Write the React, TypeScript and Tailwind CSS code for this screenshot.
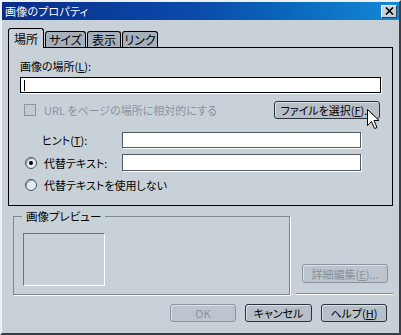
import React from "react";

const btn =
  "flex items-center justify-center rounded-[3px] border border-[#2a323c] bg-[#b7bfc9] shadow-[inset_1px_1px_0_#dde2e8] text-[11px] leading-[16px] text-black";
const btnDis =
  "flex items-center justify-center rounded-[3px] border border-[#8c949e] bg-[#bcc4cd] shadow-[inset_1px_1px_0_#dde2e8] text-[11px] leading-[16px] text-[#8b939d]";
const field =
  "h-[16px] bg-white border border-[#535b66] shadow-[1px_1px_0_#ffffff]";

function Radio({ checked }: { checked?: boolean }) {
  return (
    <span className="w-[12px] h-[12px] rounded-full border border-[#4a525c] bg-[#e4ecf0] flex items-center justify-center shadow-[inset_1px_1px_0_#9aa4ae]">
      {checked && <span className="w-[4px] h-[4px] rounded-full bg-black" />}
    </span>
  );
}

export default function App() {
  return (
    <div className="w-[401px] h-[335px] bg-[#c8d0d8] flex flex-col border-l-2 border-t-2 border-r-2 border-b-2 border-l-[#eef1f4] border-t-[#eef1f4] border-r-[#3a3f46] border-b-[#3a3f46] font-['Noto_Sans_CJK_JP',sans-serif] [font-feature-settings:'palt'] text-[11px] leading-[16px] text-black select-none relative">
      {/* title bar */}
      <div className="h-[18px] bg-linear-to-r from-[#0a2c88] via-[#0a4cac] to-[#1488d4] flex items-center justify-between pl-[3px] pr-[2px]">
        <span className="text-white text-[11px] leading-[16px] tracking-[0.2px]">画像のプロパティ</span>
        <span className="w-[16px] h-[13px] bg-[#c8d0d8] border border-t-white border-l-white border-r-[#3a3f46] border-b-[#3a3f46] flex items-center justify-center">
          <svg width="9" height="8" viewBox="0 0 9 8">
            <path d="M1 0.5 L8 7.5 M8 0.5 L1 7.5" stroke="black" strokeWidth="1.6" />
          </svg>
        </span>
      </div>

      <div className="flex flex-col px-[6px]">
        {/* tabs */}
        <div className="flex items-end h-[19px] mt-[8px] gap-[1px] text-[12px]">
          <div className="relative z-10 -mb-[1px] h-[20px] w-[36px] bg-[#c8d0d8] border-l border-t border-r border-black rounded-t-[3px] flex justify-center pt-[2px]">
            場所
          </div>
          <div className="h-[16px] w-[41px] bg-[#a6b0ba] border-l border-t border-r border-black rounded-t-[3px] flex justify-center leading-[15px]">
            サイズ
          </div>
          <div className="h-[16px] w-[34px] bg-[#a6b0ba] border-l border-t border-r border-black rounded-t-[3px] flex justify-center leading-[15px]">
            表示
          </div>
          <div className="h-[16px] w-[36px] bg-[#a6b0ba] border-l border-t border-r border-black rounded-t-[3px] flex justify-center leading-[15px]">
            リンク
          </div>
        </div>

        {/* panel */}
        <div className="h-[159px] border border-black flex flex-col pl-[11px] pt-[10px]">
          <div className="h-[16px]">
            画像の場所(<span className="underline">L</span>):
          </div>
          <div className="mt-[3px] w-[361px] h-[16px] bg-white border border-black shadow-[1px_1px_0_#ffffff] flex items-center pl-[3px]">
            <span className="w-[1px] h-[11px] bg-black" />
          </div>

          <div className="mt-[8px] h-[18px] w-[360px] flex items-center">
            <span className="ml-[4px] w-[12px] h-[12px] border border-[#8e969f] bg-[#c2cad2]" />
            <span className="ml-[8px] text-[#8b939d]">URL をページの場所に相対的にする</span>
            <div className={btn + " ml-auto w-[106px] h-[18px]"}>
              ファイルを選択(<span className="underline">F</span>)...
            </div>
          </div>

          <div className="mt-[13px] h-[16px] flex items-center">
            <span className="ml-[22px] w-[80px]">
              ヒント(<span className="underline">T</span>):
            </span>
            <span className={field + " w-[239px]"} />
          </div>

          <div className="mt-[6px] h-[17px] flex items-center">
            <span className="ml-[5px]">
              <Radio checked />
            </span>
            <span className="ml-[7px] w-[78px]">代替テキスト:</span>
            <span className={field + " w-[239px] h-[17px]"} />
          </div>

          <div className="mt-[6px] h-[16px] flex items-center">
            <span className="ml-[5px]">
              <Radio />
            </span>
            <span className="ml-[7px]">代替テキストを使用しない</span>
          </div>
        </div>

        {/* lower area */}
        <div className="flex">
          <fieldset className="mt-[2px] ml-[5px] w-[277px] h-[87px] border border-[#7e8792] shadow-[1px_1px_0_#ffffff] flex flex-col">
            <legend className="ml-[8px] px-[4px] leading-[16px] text-[11.5px]">画像プレビュー</legend>
            <div className="mt-[9px] ml-[9px] w-[82px] h-[53px] border border-t-[#6a737e] border-l-[#6a737e] border-b-white border-r-white" />
          </fieldset>
          <div className="flex-1 ml-[6px] flex flex-col">
            <div className={btnDis + " mt-[58px] ml-[6px] w-[86px] h-[19px]"}>
              詳細編集(<span className="underline">E</span>)...
            </div>
            <div className="mt-[10px] h-[2px] border-t border-t-[#7e8792] border-b border-b-white" />
          </div>
        </div>

        {/* bottom buttons */}
        <div className="mt-[9px] flex justify-end gap-[9px] mr-[6px]">
          <div className={btnDis + " w-[66px] h-[18px]"}>OK</div>
          <div className={btn + " w-[67px] h-[18px]"}>キャンセル</div>
          <div className={btn + " w-[66px] h-[18px]"}>
            ヘルプ(<span className="underline">H</span>)
          </div>
        </div>
      </div>

      {/* mouse cursor */}
      <svg
        className="absolute left-[365px] top-[107px]"
        width="13"
        height="21"
        viewBox="0 0 13 21"
      >
        <path
          d="M0.5 0.5 L0.5 16.5 L4.5 12.5 L7.5 19.5 L10 18.5 L7 11.5 L12 11.5 Z"
          fill="white"
          stroke="black"
          strokeWidth="1"
          strokeLinejoin="miter"
        />
      </svg>
    </div>
  );
}
